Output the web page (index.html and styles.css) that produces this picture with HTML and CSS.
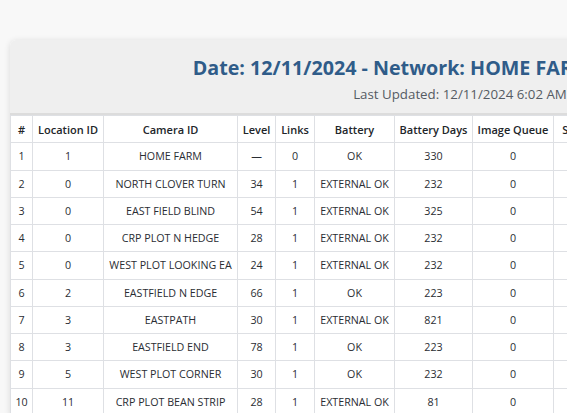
FILE: index.html
```html
<!DOCTYPE html>
<html>
<head>
<meta charset="utf-8">
<link rel="stylesheet" href="styles.css">
</head>
<body>
<div class="page">
  <section class="card">
    <header class="card-head">
      <h1 class="title">Date: 12/11/2024 - Network: HOME FARM - Cameras: 10</h1>
      <p class="updated">Last Updated: 12/11/2024 6:02 AM</p>
    </header>
    <table class="grid">
      <colgroup>
        <col class="c-num"><col class="c-loc"><col class="c-cam"><col class="c-lvl"><col class="c-lnk"><col class="c-bat"><col class="c-days"><col class="c-queue"><col class="c-sig"><col class="c-rest">
      </colgroup>
      <thead>
        <tr><th>#</th><th>Location ID</th><th>Camera ID</th><th>Level</th><th>Links</th><th>Battery</th><th>Battery Days</th><th>Image Queue</th><th>Signal</th><th>Status</th></tr>
      </thead>
      <tbody>
        <tr><td>1</td><td>1</td><td>HOME FARM</td><td>—</td><td>0</td><td>OK</td><td>330</td><td>0</td><td></td><td></td></tr>
        <tr><td>2</td><td>0</td><td>NORTH CLOVER TURN</td><td>34</td><td>1</td><td>EXTERNAL OK</td><td>232</td><td>0</td><td></td><td></td></tr>
        <tr><td>3</td><td>0</td><td>EAST FIELD BLIND</td><td>54</td><td>1</td><td>EXTERNAL OK</td><td>325</td><td>0</td><td></td><td></td></tr>
        <tr><td>4</td><td>0</td><td>CRP PLOT N HEDGE</td><td>28</td><td>1</td><td>EXTERNAL OK</td><td>232</td><td>0</td><td></td><td></td></tr>
        <tr><td>5</td><td>0</td><td>WEST PLOT LOOKING EA</td><td>24</td><td>1</td><td>EXTERNAL OK</td><td>232</td><td>0</td><td></td><td></td></tr>
        <tr><td>6</td><td>2</td><td>EASTFIELD N EDGE</td><td>66</td><td>1</td><td>OK</td><td>223</td><td>0</td><td></td><td></td></tr>
        <tr><td>7</td><td>3</td><td>EASTPATH</td><td>30</td><td>1</td><td>EXTERNAL OK</td><td>821</td><td>0</td><td></td><td></td></tr>
        <tr><td>8</td><td>3</td><td>EASTFIELD END</td><td>78</td><td>1</td><td>OK</td><td>223</td><td>0</td><td></td><td></td></tr>
        <tr><td>9</td><td>5</td><td>WEST PLOT CORNER</td><td>30</td><td>1</td><td>OK</td><td>232</td><td>0</td><td></td><td></td></tr>
        <tr><td>10</td><td>11</td><td>CRP PLOT BEAN STRIP</td><td>28</td><td>1</td><td>EXTERNAL OK</td><td>81</td><td>0</td><td></td><td></td></tr>
      </tbody>
    </table>
  </section>
</div>
</body>
</html>
```

FILE: styles.css
```css
html, body {
  margin: 0;
  padding: 0;
  overflow: hidden;
  background: #f8f8f8;
  font-family: "Open Sans", "Noto Sans", sans-serif;
  color: #212529;
}
.page {
  padding: 40px 0 0 10px;
}
.card {
  width: 900px;
  background: #ffffff;
  border-radius: 6px 6px 0 0;
  box-shadow: 0 1px 6px rgba(0, 0, 0, 0.12);
  overflow: hidden;
}
.card-head {
  background: #efefef;
  border-bottom: 2px solid #dcdcdc;
  height: 75px;
  box-sizing: border-box;
  padding-top: 15px;
  text-align: center;
}
.title {
  margin: 0;
  font-size: 19.7px;
  line-height: 26px;
  font-weight: 700;
  color: #2f5c89;
}
.updated {
  margin: 4px 0 0;
  font-size: 13.3px;
  line-height: 18px;
  color: #555b63;
}
.grid {
  width: 900px;
  table-layout: fixed;
  border-collapse: collapse;
  font-size: 10.7px;
}
.c-num { width: 22px; }
.c-loc { width: 71px; }
.c-cam { width: 134px; }
.c-lvl { width: 38px; }
.c-lnk { width: 39px; }
.c-bat { width: 80px; }
.c-days { width: 78px; }
.c-queue { width: 81px; }
.c-sig { width: 49px; }
.grid th, .grid td {
  border: 1px solid #dee0e4;
  height: 26.25px;
  padding: 0 4px;
  text-align: center;
  white-space: nowrap;
  overflow: hidden;
}
.grid th {
  font-weight: 600;
  font-size: 11px;
  color: #212529;
}
.grid td {
  color: #2a2d33;
}
```
